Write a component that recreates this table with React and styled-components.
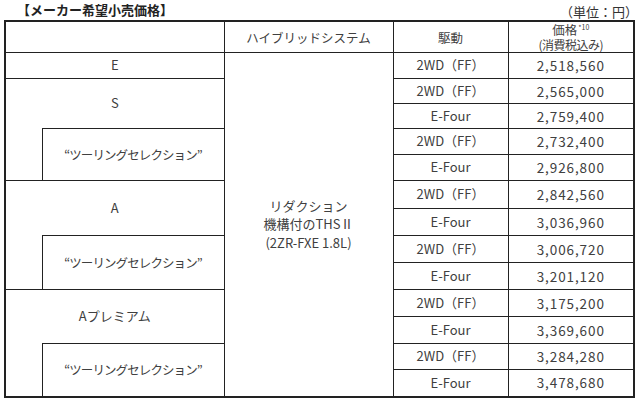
import React from "react";
import styled, { createGlobalStyle } from "styled-components";

const Global = createGlobalStyle`
  html, body { margin: 0; padding: 0; background: #fff; }
  body { font-family: "Noto Sans CJK JP", "Noto Sans", sans-serif; }
`;

const Page = styled.div`
  width: 640px;
  height: 401px;
  box-sizing: border-box;
  padding: 0 0 0 4px;
  background: #fff;
`;

const TitleBar = styled.div`
  display: flex;
  justify-content: space-between;
  align-items: center;
  height: 20px;
  width: 630px;
  padding-left: 13px;
  box-sizing: border-box;
`;

const Title = styled.div`
  font-size: 13px;
  font-weight: 700;
  color: #222;
  line-height: 20px;
`;

const Unit = styled.div`
  font-size: 13px;
  color: #333;
  line-height: 20px;
  padding-top: 4px;
  margin-right: -4px;
`;

const PriceTable = styled.table`
  border-collapse: collapse;
  table-layout: fixed;
  width: 630px;
  border: 2px solid #222;
  color: #404040;
  font-size: 13px;
`;

const Cell = styled.td`
  border: 1px solid #222;
  padding: 0;
  text-align: center;
  vertical-align: middle;
  line-height: 1.4;
  white-space: nowrap;
  ${(p) => (p.$noBottom ? "border-bottom: none;" : "")}
  ${(p) => (p.$noTop ? "border-top: none;" : "")}
  ${(p) => (p.$num ? "letter-spacing: 0.9px; font-size: 13.5px;" : "")}
  ${(p) => (p.$kana ? "font-size: 12.5px; letter-spacing: -0.9px;" : "")}
`;

const HeadCell = styled(Cell)`
  line-height: 15px;
  font-size: 12.5px;
`;

const Sup = styled.sup`
  font-size: 7px;
  vertical-align: 5px;
  line-height: 0;
  margin-left: 1px;
`;

const Small = styled.span`
  font-size: 12px;
  letter-spacing: -0.5px;
`;

const HybridText = styled.div`
  line-height: 18.5px;
  font-size: 13px;
`;

const Row = styled.tr`
  height: ${(p) => p.$h}px;
`;

const heights = [31, 26, 25, 25, 26, 26, 28, 27, 27, 27, 27, 27, 26, 27];

const prices = [
  ["2WD（FF）", "2,518,560"],
  ["2WD（FF）", "2,565,000"],
  ["E-Four", "2,759,400"],
  ["2WD（FF）", "2,732,400"],
  ["E-Four", "2,926,800"],
  ["2WD（FF）", "2,842,560"],
  ["E-Four", "3,036,960"],
  ["2WD（FF）", "3,006,720"],
  ["E-Four", "3,201,120"],
  ["2WD（FF）", "3,175,200"],
  ["E-Four", "3,369,600"],
  ["2WD（FF）", "3,284,280"],
  ["E-Four", "3,478,680"],
];

const grades = { 1: "S", 5: "A", 9: "Aプレミアム" };
const TOURING = "“ツーリングセレクション”";

function gradeCells(i) {
  if (i === 0) return [<Cell key="g" colSpan={2}>E</Cell>];
  if (grades[i])
    return [
      <Cell key="g" colSpan={2} rowSpan={2} $noBottom>
        {grades[i]}
      </Cell>,
    ];
  if (i === 3 || i === 7 || i === 11)
    return [
      <Cell key="s" rowSpan={2} $noTop />,
      <Cell key="t" rowSpan={2} $kana>
        {TOURING}
      </Cell>,
    ];
  return [];
}

export default function App() {
  return (
    <>
      <Global />
      <Page>
        <TitleBar>
          <Title>【メーカー希望小売価格】</Title>
          <Unit>（単位：円）</Unit>
        </TitleBar>
        <PriceTable>
          <colgroup>
            <col style={{ width: 37 }} />
            <col style={{ width: 182 }} />
            <col style={{ width: 169 }} />
            <col style={{ width: 115 }} />
            <col style={{ width: 126 }} />
          </colgroup>
          <tbody>
            <Row $h={heights[0]}>
              <HeadCell colSpan={2} />
              <HeadCell>ハイブリッドシステム</HeadCell>
              <HeadCell>駆動</HeadCell>
              <HeadCell>
                価格<Sup>*10</Sup>
                <br />
                <Small>(消費税込み)</Small>
              </HeadCell>
            </Row>
            {prices.map(([drive, price], i) => (
              <Row key={i} $h={heights[i + 1]}>
                {gradeCells(i)}
                {i === 0 && (
                  <Cell rowSpan={13}>
                    <HybridText>
                      リダクション
                      <br />
                      機構付のTHSⅡ
                      <br />
                      (2ZR-FXE 1.8L)
                    </HybridText>
                  </Cell>
                )}
                <Cell>{drive}</Cell>
                <Cell $num>{price}</Cell>
              </Row>
            ))}
          </tbody>
        </PriceTable>
      </Page>
    </>
  );
}
